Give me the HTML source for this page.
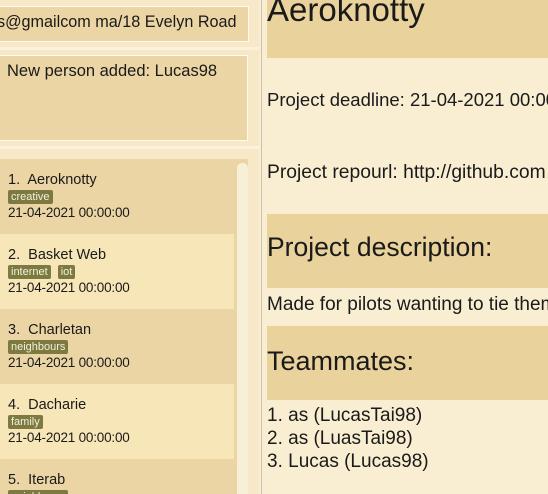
<!DOCTYPE html>
<html><head><style>
*{margin:0;padding:0;box-sizing:border-box}
html,body{width:548px;height:494px;overflow:hidden}
body{background:#f9eed2;font-family:"Liberation Sans",sans-serif;position:relative;color:#1a1a1a}
.abs{position:absolute}
.left{left:0;top:0;width:259px;height:494px;background:#f7e9c8}
.box{background:#ebd5a4;border:1px solid #fffaf0;}
.row{position:absolute;left:0;width:234px;height:75px;padding-left:8px;overflow:hidden}
.d{background:#ebd5a4}.l{background:#f7e6b8}
.nm{position:absolute;top:13px;left:8px;font-size:14.5px}
.tags{position:absolute;top:31px;left:8px;display:flex;gap:7px}
.tag{background:#7c7a40;color:#f4f0dc;font-size:11px;height:14px;line-height:14px;padding:0 3px;border-radius:2px}
.dt{position:absolute;top:46px;left:8px;font-size:13.5px;letter-spacing:-0.2px}
.right{position:absolute;left:262px;top:0;width:286px;height:494px;overflow:hidden}
.r{position:absolute;left:5px;width:300px;font-size:19px;white-space:nowrap}
.hb{background:#e9d29b;position:absolute;left:5px;width:290px}
</style></head><body>
<div class="abs left"></div>
<div class="abs box" style="left:-2px;top:6px;width:251px;height:36px"></div>
<div class="abs" style="top:13px;font-size:16.2px;white-space:nowrap;left:-3px;width:250px;overflow:hidden">s@gmailcom ma/18 Evelyn Road</div>
<div class="abs" style="left:0;top:47px;width:259px;height:3px;background:#fbf1dc"></div>
<div class="abs box" style="left:-2px;top:55px;width:250px;height:86px"></div>
<div class="abs" style="left:7px;top:62px;font-size:16.5px">New person added: Lucas98</div>
<div class="abs" style="left:0;top:146px;width:259px;height:3px;background:#fbf1dc"></div>
<div class="abs" style="left:0;top:159px;width:248px;height:335px;background:#ebd5a4;overflow:hidden">
<div class="row d" style="top:0px"><div class="nm">1.&nbsp; Aeroknotty</div><div class="tags"><span class="tag">creative</span></div><div class="dt">21-04-2021 00:00:00</div></div>
<div class="row l" style="top:75px"><div class="nm">2.&nbsp; Basket Web</div><div class="tags"><span class="tag">internet</span><span class="tag">iot</span></div><div class="dt">21-04-2021 00:00:00</div></div>
<div class="row d" style="top:150px"><div class="nm">3.&nbsp; Charletan</div><div class="tags"><span class="tag">neighbours</span></div><div class="dt">21-04-2021 00:00:00</div></div>
<div class="row l" style="top:225px"><div class="nm">4.&nbsp; Dacharie</div><div class="tags"><span class="tag">family</span></div><div class="dt">21-04-2021 00:00:00</div></div>
<div class="row d" style="top:300px"><div class="nm">5.&nbsp; Iterab</div><div class="tags"><span class="tag">neighbours</span></div></div>
<div class="abs" style="left:237px;top:4px;width:11px;height:331px;background:#f8efd9;border-radius:5px 5px 0 0"></div>
</div>
<div class="abs" style="left:261px;top:0;width:1px;height:494px;background:#c9c2b0"></div>
<div class="right">
<div class="hb" style="top:0;height:58px"></div>
<div class="r" style="top:-9px;font-size:33px">Aeroknotty</div>
<div class="r" style="top:89px;font-size:18.5px">Project deadline: 21-04-2021 00:00:00</div>
<div class="r" style="top:162px;font-size:19.3px">Project repourl: http://github.com</div>
<div class="hb" style="top:214px;height:74px"></div>
<div class="r" style="top:232px;font-size:26.5px">Project description:</div>
<div class="r" style="top:294px">Made for pilots wanting to tie them</div>
<div class="hb" style="top:326px;height:74px"></div>
<div class="r" style="top:346px;font-size:27px">Teammates:</div>
<div class="r" style="top:404px;line-height:23px">1. as (LucasTai98)<br>2. as (LuasTai98)<br>3. Lucas (Lucas98)</div>
</div>
</body></html>
